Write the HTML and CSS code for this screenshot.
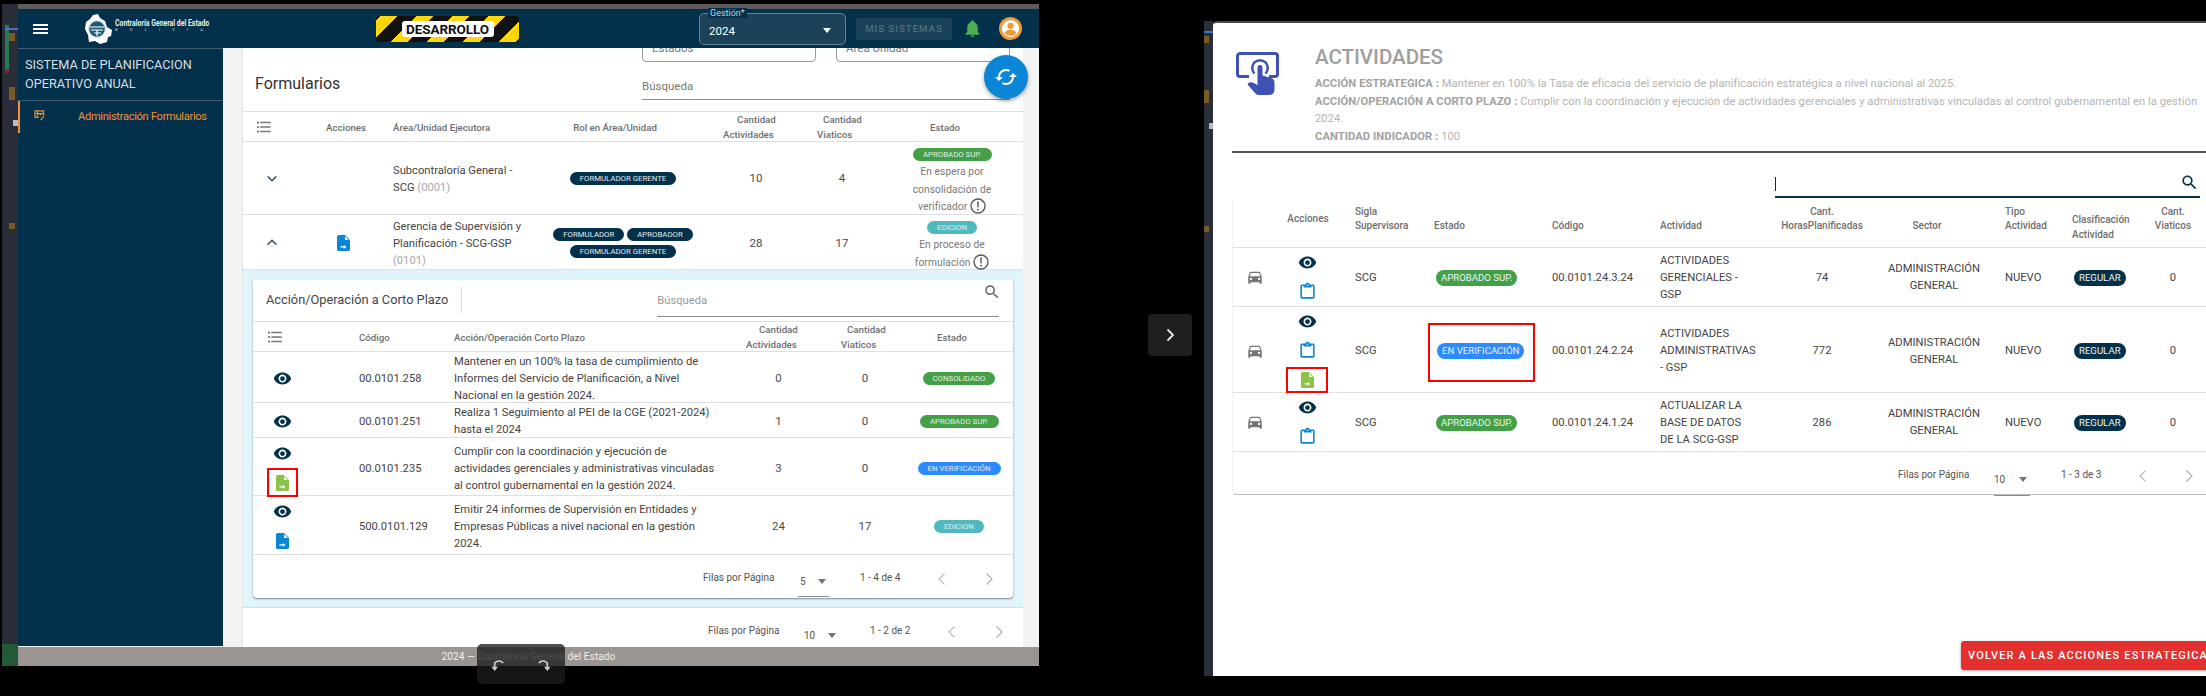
FILE: index.html
```html
<!DOCTYPE html>
<html lang="es">
<head>
<meta charset="utf-8">
<title>Formularios</title>
<link rel="stylesheet" href="styles.css">
</head>
<body>
<svg class="defs" width="0" height="0">
  <defs>
    <symbol id="eye" viewBox="0 0 24 24"><path fill="currentColor" d="M12 4.5C7 4.5 2.73 7.61 1 12c1.73 4.39 6 7.5 11 7.5s9.27-3.11 11-7.5c-1.73-4.39-6-7.5-11-7.5zM12 17c-2.76 0-5-2.24-5-5s2.24-5 5-5 5 2.24 5 5-2.24 5-5 5zm0-8c-1.66 0-3 1.34-3 3s1.34 3 3 3 3-1.34 3-3-1.34-3-3-3z"/></symbol>
    <symbol id="file" viewBox="0 0 13 16"><path fill="currentColor" d="M1.5 0H8l5 5v9.5a1.5 1.5 0 0 1-1.5 1.5h-10A1.5 1.5 0 0 1 0 14.500V1.500A1.500 1.500 0 0 1 1.500 0z"/><path fill="#fff" d="M8 1.200V5h3.800zM3.500 11.300h3.300V10l2.700 1.900-2.700 1.900v-1.300H3.500z"/></symbol>
    <symbol id="clip" viewBox="0 0 24 24"><path fill="currentColor" d="M19 3h-4.180C14.400 1.840 13.300 1 12 1c-1.300 0-2.400.84-2.820 2H5a2 2 0 0 0-2 2v14a2 2 0 0 0 2 2h14a2 2 0 0 0 2-2V5a2 2 0 0 0-2-2zm-7 0a1 1 0 1 1 0 2 1 1 0 0 1 0-2zM7 7h10V5h2v14H5V5h2z"/></symbol>
    <symbol id="car" viewBox="0 0 24 24"><path fill="currentColor" d="M18.920 6.010C18.720 5.420 18.160 5 17.500 5h-11c-.66 0-1.210.42-1.420 1.010L3 12v8c0 .55.45 1 1 1h1c.55 0 1-.45 1-1v-1h12v1c0 .55.45 1 1 1h1c.55 0 1-.45 1-1v-8l-2.080-5.990zM6.500 16c-.83 0-1.500-.67-1.500-1.500S5.670 13 6.500 13s1.500.67 1.500 1.500S7.330 16 6.500 16zm11 0c-.83 0-1.500-.67-1.500-1.500s.67-1.500 1.500-1.500 1.500.67 1.500 1.500-.67 1.500-1.500 1.500zM5 11l1.500-4.500h11L19 11H5z"/></symbol>
    <symbol id="list" viewBox="0 0 24 24"><path fill="currentColor" d="M7 5h14v2H7zM7 13v-2h14v2zM4 4.500a1.500 1.500 0 1 1 0 3 1.500 1.500 0 0 1 0-3zM4 10.500a1.500 1.500 0 1 1 0 3 1.500 1.500 0 0 1 0-3zM7 19v-2h14v2zM4 16.500a1.500 1.500 0 1 1 0 3 1.500 1.500 0 0 1 0-3z"/></symbol>
    <symbol id="search" viewBox="0 0 24 24"><path fill="currentColor" d="M15.500 14h-.79l-.28-.27C15.410 12.590 16 11.110 16 9.500 16 5.910 13.090 3 9.500 3S3 5.910 3 9.500 5.910 16 9.500 16c1.610 0 3.090-.59 4.230-1.570l.27.28v.79l5 4.990L20.490 19l-4.990-5zm-6 0C7.010 14 5 11.990 5 9.500S7.010 5 9.500 5 14 7.010 14 9.500 11.990 14 9.500 14z"/></symbol>
    <symbol id="info" viewBox="0 0 16 16"><circle cx="8" cy="8" r="7" fill="none" stroke="currentColor" stroke-width="1.300"/><path fill="currentColor" d="M7.200 3.500h1.600l-.2 6H7.400zM7.200 10.800h1.600v1.600H7.200z"/></symbol>
    <symbol id="left" viewBox="0 0 16 16"><path fill="none" stroke="currentColor" stroke-width="1.200" d="M10.500 2.500 5 8l5.500 5.500"/></symbol>
    <symbol id="right" viewBox="0 0 16 16"><path fill="none" stroke="currentColor" stroke-width="1.200" d="M5.500 2.500 11 8l-5.500 5.500"/></symbol>
  </defs>
</svg>

<div class="strip strip-left">
  <i class="bit bit-a"></i><i class="bit bit-b"></i><i class="bit bit-c"></i><i class="bit bit-d"></i><i class="bit bit-e"></i><i class="bit bit-f"></i><i class="bit bit-g"></i>
</div>

<section class="win win-left">
  <div class="chrome"></div>
  <header class="topbar">
    <button class="burger" type="button" aria-label="menu"><span></span><span></span><span></span></button>
    <div class="logo">
      <svg class="logo-map" viewBox="0 0 28 31"><path fill="#fff" d="M8 1l5-1 2 4 5 3 2 6 5 3-1 6-3 1-1 5-7 2-5-3-6 1-1-7-3-6 1-7 4-3z"/><circle cx="12" cy="15" r="8.500" fill="#1f5a75" stroke="#dfe8ec" stroke-width="1.500"/><path fill="none" stroke="#fff" stroke-width="1.200" d="M5 13h14M6 16h12M9 19h7M12 16v6"/></svg>
      <div class="logo-text"><b>Contraloría General del Estado</b><small>B O L I V I A</small></div>
    </div>
    <div class="hazard"><span>DESARROLLO</span></div>
    <div class="gestion">
      <span class="gestion-label">Gestión*</span>
      <span class="gestion-value">2024</span>
      <i class="caret caret-white"></i>
    </div>
    <button class="sys" type="button">MIS SISTEMAS</button>
    <svg class="bell" viewBox="0 0 24 24"><path fill="currentColor" d="M12 22c1.100 0 2-.9 2-2h-4c0 1.100.9 2 2 2zm6-6v-5c0-3.070-1.630-5.640-4.500-6.320V4c0-.83-.67-1.500-1.500-1.500s-1.500.67-1.500 1.500v.68C7.640 5.360 6 7.920 6 11v5l-2 2v1h16v-1l-2-2z"/></svg>
    <svg class="avatar" viewBox="0 0 24 24"><circle cx="12" cy="12" r="12" fill="#f09a37"/><circle cx="12" cy="12" r="9" fill="#fff"/><circle cx="12" cy="9.200" r="3.300" fill="#f09a37"/><path fill="#f09a37" d="M5.800 17c1-2.600 3.500-3.600 6.200-3.600s5.200 1 6.200 3.600a8 8 0 0 1-12.400 0z"/></svg>
  </header>

  <div class="body">
    <aside class="sidebar">
      <div class="side-title">SISTEMA DE PLANIFICACION OPERATIVO ANUAL</div>
      <a class="side-item">
        <svg class="side-ico" viewBox="0 0 12 12"><path fill="none" stroke="currentColor" stroke-width="1.200" d="M10.500 5.500V1H1v7h4M1 4h9.500M4 1v7M7 4v2"/><path fill="none" stroke="currentColor" stroke-width="1.400" d="M11 6 7.500 11"/></svg>
        <span>Administración Formularios</span>
      </a>
    </aside>

    <main class="main">
      <div class="card">
        <div class="card-top">
          <h1>Formularios</h1>
          <div class="card-tools">
            <div class="filters">
              <div class="outlined outlined-a"><span>Estados</span></div>
              <div class="outlined outlined-b"><span>Área Unidad</span></div>
            </div>
            <div class="search-line"><span>Búsqueda</span></div>
          </div>
        </div>

        <div class="grid-a grid-head">
          <div class="head-list"><svg class="ico-list"><use href="#list"/></svg></div>
          <div class="center">Acciones</div>
          <div class="pad-area">Área/Unidad Ejecutora</div>
          <div class="rol-cell">Rol en Área/Unidad</div>
          <div class="two two-act"><span>Cantidad</span><br>Actividades</div>
          <div class="two two-via"><span>Cantidad</span><br>Viaticos</div>
          <div class="estado-head">Estado</div>
        </div>

        <div class="grid-a row row-73">
          <div class="center chev"><svg class="ico-chev" viewBox="0 0 16 16"><path fill="none" stroke="currentColor" stroke-width="1.800" d="M3 5l5 5 5-5"/></svg></div>
          <div></div>
          <div class="pad-area">Subcontraloría General -<br>SCG <em>(0001)</em></div>
          <div class="chips-cell"><span class="chip chip-dark">FORMULADOR GERENTE</span></div>
          <div class="center num">10</div>
          <div class="center num">4</div>
          <div class="status-cell">
            <span class="chip chip-green chip-w79">APROBADO SUP.</span>
            <span class="note">En espera por<br>consolidación de<br>verificador <svg class="ico-info"><use href="#info"/></svg></span>
          </div>
        </div>

        <div class="grid-a row row-55">
          <div class="center chev"><svg class="ico-chev" viewBox="0 0 16 16"><path fill="none" stroke="currentColor" stroke-width="1.800" d="M3 10l5-5 5 5"/></svg></div>
          <div class="center doc-cell"><svg class="ico-file blue"><use href="#file"/></svg></div>
          <div class="pad-area">Gerencia de Supervisión y<br>Planificación - SCG-GSP<br><em>(0101)</em></div>
          <div class="chips-cell rol-stack">
            <div class="chip-pair"><span class="chip chip-dark">FORMULADOR</span><span class="chip chip-dark">APROBADOR</span></div>
            <span class="chip chip-dark">FORMULADOR GERENTE</span>
          </div>
          <div class="center num">28</div>
          <div class="center num">17</div>
          <div class="status-cell">
            <span class="chip chip-teal chip-w50">EDICION</span>
            <span class="note">En proceso de<br>formulación <svg class="ico-info"><use href="#info"/></svg></span>
          </div>
        </div>

        <div class="panel">
          <div class="inner">
            <div class="inner-top">
              <h2>Acción/Operación a Corto Plazo</h2>
              <div class="inner-search"><span>Búsqueda</span><svg class="ico-search"><use href="#search"/></svg></div>
            </div>
            <div class="grid-b grid-head">
              <div class="inner-list"><svg class="ico-list"><use href="#list"/></svg></div>
              <div class="pad-code">Código</div>
              <div>Acción/Operación Corto Plazo</div>
              <div class="two two-iact"><span>Cantidad</span><br>Actividades</div>
              <div class="two two-ivia"><span>Cantidad</span><br>Viaticos</div>
              <div class="iestado-head">Estado</div>
            </div>

            <div class="grid-b row row-51">
              <div class="acts"><span class="act"><svg class="ico-eye"><use href="#eye"/></svg></span></div>
              <div class="pad-code">00.0101.258</div>
              <div>Mantener en un 100% la tasa de cumplimiento de<br>Informes del Servicio de Planificación, a Nivel<br>Nacional en la gestión 2024.</div>
              <div class="center num">0</div>
              <div class="center num">0</div>
              <div class="center"><span class="chip chip-green chip-w72">CONSOLIDADO</span></div>
            </div>
            <div class="grid-b row row-35">
              <div class="acts"><span class="act"><svg class="ico-eye"><use href="#eye"/></svg></span></div>
              <div class="pad-code">00.0101.251</div>
              <div>Realiza 1 Seguimiento al PEI de la CGE (2021-2024)<br>hasta el 2024</div>
              <div class="center num">1</div>
              <div class="center num">0</div>
              <div class="center"><span class="chip chip-green chip-w79">APROBADO SUP.</span></div>
            </div>
            <div class="grid-b row row-58">
              <div class="acts">
                <span class="act"><svg class="ico-eye"><use href="#eye"/></svg></span>
                <span class="act"><span class="flag flag-s"><svg class="ico-file lime"><use href="#file"/></svg></span></span>
              </div>
              <div class="pad-code">00.0101.235</div>
              <div>Cumplir con la coordinación y ejecución de<br>actividades gerenciales y administrativas vinculadas<br>al control gubernamental en la gestión 2024.</div>
              <div class="center num">3</div>
              <div class="center num">0</div>
              <div class="center"><span class="chip chip-blue chip-w83">EN VERIFICACIÓN</span></div>
            </div>
            <div class="grid-b row row-59">
              <div class="acts">
                <span class="act"><svg class="ico-eye"><use href="#eye"/></svg></span>
                <span class="act"><svg class="ico-file blue"><use href="#file"/></svg></span>
              </div>
              <div class="pad-code">500.0101.129</div>
              <div>Emitir 24 informes de Supervisión en Entidades y<br>Empresas Públicas a nivel nacional en la gestión<br>2024.</div>
              <div class="center num">24</div>
              <div class="center num">17</div>
              <div class="center"><span class="chip chip-teal chip-w50">EDICION</span></div>
            </div>

            <div class="pager pager-inner">
              <span class="p-label">Filas por Página</span>
              <span class="p-select p-under"><span>5</span><i class="caret"></i></span>
              <span class="p-range">1 - 4 de 4</span>
              <svg class="p-chev p-chev-a"><use href="#left"/></svg>
              <svg class="p-chev p-chev-b"><use href="#right"/></svg>
            </div>
          </div>
        </div>

        <div class="pager pager-outer">
          <span class="p-label">Filas por Página</span>
          <span class="p-select"><span>10</span><i class="caret"></i></span>
          <span class="p-range">1 - 2 de 2</span>
          <svg class="p-chev p-chev-a"><use href="#left"/></svg>
          <svg class="p-chev p-chev-b"><use href="#right"/></svg>
        </div>
      </div>
      <button class="fab" type="button" aria-label="refrescar"><svg viewBox="0 0 24 24"><path fill="#fff" transform="rotate(90 12 12)" d="M12 18a6 6 0 0 1-6-6c0-1 .25-1.970.7-2.800L5.240 7.740A7.900 7.900 0 0 0 4 12a8 8 0 0 0 8 8v3l4-4-4-4zM12 4V1L8 5l4 4V6a6 6 0 0 1 6 6c0 1-.25 1.970-.7 2.800l1.460 1.460A7.900 7.900 0 0 0 20 12a8 8 0 0 0-8-8z"/></svg></button>
    </main>
  </div>
  <footer class="foot">2024 — Contraloría General del Estado</footer>
</section>
<div class="foot-green"></div>

<div class="toolbar">
  <svg viewBox="0 0 16 16"><path fill="none" stroke="currentColor" stroke-width="1.700" d="M14 6.500C12 3.500 7.500 3.500 5 6.500v6"/><path fill="currentColor" d="M1.500 10.500h7L5 15z"/></svg>
  <svg viewBox="0 0 16 16"><path fill="none" stroke="currentColor" stroke-width="1.700" d="M2 6.500C4 3.500 8.500 3.500 11 6.500v6"/><path fill="currentColor" d="M7.500 10.500h7L11 15z"/></svg>
</div>

<button class="nav-next" type="button" aria-label="siguiente"><svg viewBox="0 0 16 16"><path fill="none" stroke="currentColor" stroke-width="1.800" d="M5.500 2.500 11 8l-5.500 5.500"/></svg></button>

<div class="strip strip-right">
  <i class="bit bit-h"></i><i class="bit bit-i"></i><i class="bit bit-j"></i><i class="bit bit-k"></i><i class="bit bit-l"></i>
</div>

<section class="win win-right">
  <div class="act-head">
    <svg class="touch" viewBox="0 0 43 43"><path fill="none" stroke="currentColor" stroke-width="3" d="M13 24.500H4A2.500 2.500 0 0 1 1.500 22V4A2.500 2.500 0 0 1 4 1.500h35A2.500 2.500 0 0 1 41.500 4v18a2.500 2.500 0 0 1-2.500 2.500h-6"/><path fill="none" stroke="currentColor" stroke-width="2.500" d="M18.500 21.500a7.800 7.800 0 1 1 11 0"/><path fill="currentColor" d="M21.500 15.500a2.500 2.500 0 0 1 5 0v8l8.500 2.500c2 .6 3.500 2 3.500 4.500V38a5 5 0 0 1-5 5H23c-2 0-3-1-4-2l-7-8c-.6-.8-.4-1.500 1-2.200 2-1 4-.5 8.500 2.500z"/></svg>
    <div class="act-text">
      <h1>ACTIVIDADES</h1>
      <p><b>ACCIÓN ESTRATEGICA :</b> Mantener en 100% la Tasa de eficacia del servicio de planificación estratégica a nivel nacional al 2025.</p>
      <p><b>ACCIÓN/OPERACIÓN A CORTO PLAZO :</b> Cumplir con la coordinación y ejecución de actividades gerenciales y administrativas vinculadas al control gubernamental en la gestión<br>2024.</p>
      <p><b>CANTIDAD INDICADOR :</b> 100</p>
    </div>
  </div>

  <div class="act-search"><div class="act-search-box"><i class="cursor"></i><svg class="ico-search navy"><use href="#search"/></svg></div></div>

  <div class="act-table">
    <div class="grid-c grid-head head-48">
      <div></div>
      <div class="center up">Acciones</div>
      <div class="pad-sigla down">Sigla<br>Supervisora</div>
      <div class="single">Estado</div>
      <div class="single">Código</div>
      <div class="single">Actividad</div>
      <div class="center down cant">Cant.<br>HorasPlanificadas</div>
      <div class="center single sector">Sector</div>
      <div class="pad-tipo down">Tipo<br>Actividad</div>
      <div class="clasif">Clasificación<br>Actividad</div>
      <div class="center down">Cant.<br>Viaticos</div>
    </div>

    <div class="grid-c row r-59">
      <div class="center"><svg class="ico-car"><use href="#car"/></svg></div>
      <div class="acts"><span class="act"><svg class="ico-eye"><use href="#eye"/></svg></span><span class="act"><svg class="ico-clip"><use href="#clip"/></svg></span></div>
      <div class="pad-sigla">SCG</div>
      <div><span class="chip-r chip-green">APROBADO SUP.</span></div>
      <div>00.0101.24.3.24</div>
      <div class="clip-cell">ACTIVIDADES<br>GERENCIALES -<br>GSP</div>
      <div class="center cant">74</div>
      <div class="center">ADMINISTRACIÓN<br>GENERAL</div>
      <div class="pad-tipo">NUEVO</div>
      <div><span class="chip-r chip-dark chip-reg">REGULAR</span></div>
      <div class="center">0</div>
    </div>
    <div class="grid-c row r-86">
      <div class="center"><svg class="ico-car"><use href="#car"/></svg></div>
      <div class="acts"><span class="act"><svg class="ico-eye"><use href="#eye"/></svg></span><span class="act"><svg class="ico-clip"><use href="#clip"/></svg></span><span class="act"><span class="flag flag-w"><svg class="ico-file lime"><use href="#file"/></svg></span></span></div>
      <div class="pad-sigla">SCG</div>
      <div><span class="flag flag-chip"><span class="chip-r chip-blue">EN VERIFICACIÓN</span></span></div>
      <div>00.0101.24.2.24</div>
      <div class="clip-cell">ACTIVIDADES<br>ADMINISTRATIVAS<br>- GSP</div>
      <div class="center cant">772</div>
      <div class="center">ADMINISTRACIÓN<br>GENERAL</div>
      <div class="pad-tipo">NUEVO</div>
      <div><span class="chip-r chip-dark chip-reg">REGULAR</span></div>
      <div class="center">0</div>
    </div>
    <div class="grid-c row r-59">
      <div class="center"><svg class="ico-car"><use href="#car"/></svg></div>
      <div class="acts"><span class="act"><svg class="ico-eye"><use href="#eye"/></svg></span><span class="act"><svg class="ico-clip"><use href="#clip"/></svg></span></div>
      <div class="pad-sigla">SCG</div>
      <div><span class="chip-r chip-green">APROBADO SUP.</span></div>
      <div>00.0101.24.1.24</div>
      <div class="clip-cell">ACTUALIZAR LA<br>BASE DE DATOS<br>DE LA SCG-GSP</div>
      <div class="center cant">286</div>
      <div class="center">ADMINISTRACIÓN<br>GENERAL</div>
      <div class="pad-tipo">NUEVO</div>
      <div><span class="chip-r chip-dark chip-reg">REGULAR</span></div>
      <div class="center">0</div>
    </div>

    <div class="pager pager-act">
      <span class="p-label">Filas por Página</span>
      <span class="p-select p-under"><span>10</span><i class="caret"></i></span>
      <span class="p-range">1 - 3 de 3</span>
      <svg class="p-chev p-chev-a"><use href="#left"/></svg>
      <svg class="p-chev p-chev-b"><use href="#right"/></svg>
    </div>
  </div>

  <button class="back" type="button">VOLVER A LAS ACCIONES ESTRATEGICAS</button>
</section>
</body>
</html>
```

FILE: styles.css
```css
* { box-sizing: border-box; }
html, body { margin: 0; padding: 0; }
body {
  position: relative;
  width: 2206px;
  height: 696px;
  overflow: hidden;
  background: #000;
  font-family: Roboto, "Liberation Sans", sans-serif;
  font-size: 11.2px;
  color: #444;
}
.defs { position: absolute; }
h1, h2, p { margin: 0; font-weight: 400; }
button { font-family: inherit; border: 0; padding: 0; }
em { font-style: normal; color: #a8a8a8; }

/* windows on the desktop */
.win { position: absolute; overflow: hidden; }
.win-left { left: 18px; top: 4px; width: 1021px; height: 662px; display: flex; flex-direction: column; background: #f3f3f3; }
.win-right { left: 1213px; top: 21px; width: 993px; height: 655px; background: #fff; border-top: 2px solid #4a4a4a; border-top-left-radius: 4px; display: flex; flex-direction: column; }
.strip { position: absolute; background: #2a2e38; }
.strip-left { left: 2px; top: 4px; width: 16px; height: 662px; }
.strip-right { left: 1204px; top: 21px; width: 9px; height: 655px; }
.bit { position: absolute; display: block; }
.bit-a { left: 3px; top: 21px; width: 4px; height: 48px; background: #2c7a55; }
.bit-b { left: 3px; top: 24px; width: 13px; height: 2px; background: #4472c4; }
.bit-c { left: 7px; top: 29px; width: 6px; height: 8px; background: #7a5a28; }
.bit-d { left: 7px; top: 83px; width: 6px; height: 13px; background: #7a5a28; }
.bit-e { left: 11px; top: 116px; width: 5px; height: 6px; background: #b4bcc8; }
.bit-f { left: 7px; top: 219px; width: 6px; height: 6px; background: #7a5a28; }
.bit-g { left: 3px; top: 65px; width: 4px; height: 4px; background: #7a2b38; }
.bit-h { left: 0; top: 10px; width: 9px; height: 2px; background: #4472c4; }
.bit-i { left: 0; top: 15px; width: 5px; height: 7px; background: #7a5a28; }
.bit-j { left: 0; top: 69px; width: 5px; height: 13px; background: #7a5a28; }
.bit-k { left: 5px; top: 102px; width: 4px; height: 6px; background: #b4bcc8; }
.bit-l { left: 0; top: 205px; width: 5px; height: 6px; background: #7a5a28; }
.foot-green { position: absolute; left: 2px; top: 644px; width: 16px; height: 22px; background: #235a36; }

.chrome { height: 5px; background: #5c5c5c; flex: none; }
.topbar { height: 39px; flex: none; background: #03304a; display: flex; align-items: center; position: relative; }
.burger { width: 15px; height: 10px; margin-left: 15px; background: none; display: flex; flex-direction: column; justify-content: space-between; flex: none; }
.burger span { display: block; height: 2px; background: #fff; }
.logo { display: flex; align-items: center; margin-left: 37px; width: 291px; flex: none; }
.logo-map { width: 28px; height: 31px; flex: none; margin-top: 1px; }
.logo-text { margin-left: 2px; margin-top: -6px; color: #e8eef1; white-space: nowrap; line-height: 8px; }
.logo-text b { display: block; font-family: "Liberation Sans Narrow", Roboto, sans-serif; font-size: 9.200px; transform: scaleX(.75); transform-origin: left center; }
.logo-text small { display: block; font-size: 4px; letter-spacing: 5.600px; line-height: 6px; color: #c3ccd1; }
.hazard { width: 143px; height: 26px; border-radius: 4px; display: flex; align-items: center; justify-content: center; background: repeating-linear-gradient(135deg, #111 0 3px, #ffd60a 3px 15px, #111 15px 25.500px); flex: none; }
.hazard span { width: 92px; height: 16px; border-radius: 3px; background: #fff; color: #111; font-size: 13.500px; font-weight: 700; line-height: 16px; text-align: center; letter-spacing: -.1px; }
.gestion { position: relative; margin-left: 180px; width: 147px; height: 32px; background: #1b4257; border: 1px solid #668394; border-radius: 5px; color: #fff; flex: none; }
.gestion-label { position: absolute; left: 8px; top: -6px; padding: 0 2px; background: #03304a; font-size: 9px; line-height: 10px; color: #c7d2d8; }
.gestion-value { position: absolute; left: 9px; top: 10px; font-size: 11.500px; line-height: 14px; }
.gestion .caret { position: absolute; right: 14px; top: 14px; }
.caret { display: inline-block; width: 0; height: 0; border: 4px solid transparent; border-top: 5px solid #757575; border-bottom: 0; }
.caret-white { border-top-color: #fff; }
.sys { margin-left: 10px; width: 96px; height: 22px; border-radius: 3px; background: #1a4258; color: #4f6f80; font-size: 9.600px; font-weight: 500; letter-spacing: 1px; flex: none; }
.bell { width: 21px; height: 21px; color: #4caf50; margin-left: 10px; flex: none; }
.avatar { width: 23px; height: 23px; margin-left: 16px; flex: none; }

.body { flex: 1; min-height: 0; display: flex; position: relative; }
.sidebar { width: 205px; flex: none; background: #03304a; border-top: 1px solid #3f5c6f; margin-bottom: 1px; }
.side-title { height: 52px; padding: 6px 12px 0 7px; border-bottom: 1px solid #3f5c6f; color: #d7dfe4; font-size: 12.700px; line-height: 19px; }
.side-item { height: 32px; display: flex; align-items: center; border-left: 2px solid #f0923b; color: #f0923b; font-size: 11.100px; letter-spacing: -.3px; }
.side-ico { width: 11px; height: 11px; margin-left: 14px; margin-top: -4px; flex: none; }
.side-item span { margin-left: 33px; margin-top: -1px; white-space: nowrap; }

.main { flex: 1; min-width: 0; position: relative; padding-left: 19px; }
.card { width: 781px; height: 100%; background: #fff; overflow: hidden; border-left: 1px solid #e4e4e4; }
.card-top { height: 64px; display: flex; justify-content: space-between; border-bottom: 1px solid #e0e0e0; }
.card-top h1 { font-size: 16px; color: #333; margin: 27px 0 0 12px; line-height: 18px; }
.card-tools { width: 368px; margin-right: 13px; }
.filters { height: 14px; display: flex; justify-content: space-between; overflow: hidden; }
.outlined { height: 34px; margin-top: -20px; border: 1px solid #9a9a9a; border-radius: 4px; padding: 12px 9px; font-size: 11.500px; color: #777; line-height: 15px; }
.outlined-a { width: 174px; }
.outlined-b { width: 174px; }
.search-line { margin-top: 16px; height: 22px; border-bottom: 1px solid #8c8c8c; font-size: 11.500px; color: #777; line-height: 17px; }

.grid-a { display: grid; grid-template-columns: 60px 86px 157px 165px 90px 82px 138px; }
.grid-b { display: grid; grid-template-columns: 59px 142px 282px 85px 88px 100px 5px; }
.grid-c { display: grid; grid-template-columns: 43px 62px 96px 118px 108px 96px 125px 106px 85px 69px 64px; }
.grid-head { height: 30px; align-items: center; border-bottom: 1px solid #e0e0e0; font-size: 9.700px; font-weight: 500; color: #6e6e6e; line-height: 15px; white-space: nowrap; }
.row { align-items: center; border-bottom: 1px solid #e0e0e0; line-height: 17px; white-space: nowrap; }
.row-73 { height: 73px; }
.row-55 { height: 55px; }
.row-51 { height: 51px; padding-top: 1px; }
.row-35 { height: 35px; padding-top: 1px; }
.row-58 { height: 58px; padding-top: 1px; }
.row-59 { height: 59px; padding-top: 1px; }
.center { text-align: center; display: flex; flex-direction: column; align-items: center; justify-content: center; }
.num { font-size: 11.500px; color: #4a4a4a; }
.head-list { padding-left: 12px; }
.ico-list { display: block; width: 18px; height: 18px; color: #777; }
.pad-area { padding-left: 4px; }
.rol-cell { padding-right: 27px; display: flex; flex-direction: column; align-items: center; justify-content: center; }
.chips-cell { padding-right: 11px; display: flex; flex-direction: column; align-items: center; justify-content: center; }
.rol-stack { gap: 4px; }
.chip-pair { display: flex; gap: 3px; }
.doc-cell { padding-right: 6px; }
.chev { padding-right: 2px; }
.two span { display: inline-block; }
.two-act { padding-left: 12px; }
.two-act span { margin-left: 14px; }
.two-via { padding-left: 16px; }
.two-via span { margin-left: 6px; }
.estado-head { text-align: center; padding-right: 14px; }
.status-cell { display: flex; flex-direction: column; align-items: center; color: #777; padding-top: 6px; }
.note { display: block; text-align: center; color: #777; font-size: 10.200px; line-height: 17.500px; margin-top: 2px; letter-spacing: .1px; }
.ico-info { width: 16px; height: 16px; vertical-align: -4px; color: #555; }
.chev { color: #3e5566; }
.ico-chev { width: 14px; height: 14px; display: block; }
.ico-file { display: block; width: 13px; height: 16px; }
.blue { color: #0b86d6; }
.lime { color: #8bc34a; }
.chip { display: inline-block; height: 13px; padding: 0 10px; border-radius: 7px; font-size: 7.800px; line-height: 13px; text-align: center; color: #e4ecef; white-space: nowrap; }
.chip-dark { background: #03304a; }
.chip-green { background: #43a047; }
.chip-teal { background: #4fb9bf; }
.chip-blue { background: #2e8bff; }
.chip-w79 { width: 79px; padding: 0; }
.chip-w72 { width: 72px; padding: 0; }
.chip-w83 { width: 83px; padding: 0; }
.chip-w50 { width: 50px; padding: 0; }

.panel { background: #e0f4fc; padding: 10px; height: 338px; border-bottom: 1px solid #dcdcdc; }
.inner { height: 318px; background: #fff; border-radius: 0 0 4px 4px; box-shadow: 0 1px 2px rgba(0,0,0,.45); }
.inner-top { height: 42px; display: flex; align-items: center; border-bottom: 1px solid #e0e0e0; position: relative; }
.inner-top h2 { font-size: 12.800px; color: #444; padding: 0 13px 0 13px; height: 26px; line-height: 26px; border-right: 1px solid #dcdcdc; margin-top: -2px; white-space: nowrap; }
.inner-search { position: relative; margin-left: 195px; width: 342px; height: 25px; margin-top: 8px; border-bottom: 1px solid #8c8c8c; color: #999; font-size: 11.200px; line-height: 18px; }
.ico-search { position: absolute; right: -2px; top: -9px; width: 18px; height: 18px; color: #666; }
.inner-list { padding-left: 13px; }
.pad-code { padding-left: 47px; }
.two-iact { padding-left: 10px; }
.two-iact span { margin-left: 13px; }
.two-ivia { padding-left: 20px; }
.two-ivia span { margin-left: 6px; }
.iestado-head { text-align: center; padding-right: 14px; }
.acts { display: flex; flex-direction: column; align-items: center; justify-content: center; }
.act { height: 29px; display: flex; align-items: center; justify-content: center; }
.ico-eye { display: block; width: 19px; height: 19px; color: #03304a; }
.ico-clip { display: block; width: 19px; height: 19px; color: #0b86d6; }
.ico-car { display: block; width: 18px; height: 18px; color: #757575; }
.flag { display: flex; align-items: center; justify-content: center; border: 2px solid #f00; }
.flag-s { width: 31px; height: 29px; }
.flag-w { width: 42px; height: 26px; }
.flag-chip { width: 107px; height: 59px; margin-left: -6px; margin-top: 3px; justify-content: flex-start; padding-left: 7px; padding-bottom: 3px; }

.pager { display: flex; justify-content: flex-end; font-size: 10px; color: #555; white-space: nowrap; }
.p-select { display: flex; align-items: center; justify-content: space-between; }
.p-chev { width: 16px; height: 16px; color: #bdbdbd; flex: none; }
.p-chev-b { color: #b0b0b0; }
.pager-inner { height: 43px; align-items: flex-start; padding: 17px 16px 0 0; }
.pager-inner .p-label { width: 68px; }
.pager-inner .p-select { width: 31px; margin-left: 27px; height: 25px; padding: 0 3px 5px 2px; }
.p-under { border-bottom: 1px solid #8c8c8c; }
.pager-inner .p-range { width: 40px; margin-left: 31px; }
.pager-inner .p-chev-a { margin-left: 34px; margin-top: -1px; }
.pager-inner .p-chev-b { margin-left: 31px; margin-top: -1px; }
.pager-outer { height: 39px; align-items: flex-start; padding: 17px 16px 0 0; }
.pager-outer .p-label { width: 68px; }
.pager-outer .p-select { width: 32px; margin-left: 28px; height: 26px; padding: 0 0 6px 0; }
.pager-outer .p-range { width: 40px; margin-left: 34px; }
.pager-outer .p-chev-a { margin-left: 34px; margin-top: -1px; }
.pager-outer .p-chev-b { margin-left: 31px; margin-top: -1px; }

.fab { position: absolute; left: 761px; top: 7px; width: 44px; height: 44px; border-radius: 50%; background: #0b86d6; box-shadow: 0 2px 4px rgba(0,0,0,.35); display: flex; align-items: center; justify-content: center; }
.fab svg { width: 24px; height: 24px; }
.foot { height: 19px; flex: none; background: #9a9592; color: #f1efee; text-align: center; font-size: 10px; line-height: 19px; letter-spacing: .1px; }
.toolbar { position: absolute; left: 477px; top: 644px; width: 88px; height: 40px; border-radius: 5px; background: rgba(28,28,28,.78); color: #cfcfcf; display: flex; align-items: center; justify-content: space-between; padding: 0 13px; }
.toolbar svg { width: 15px; height: 15px; }
.nav-next { position: absolute; left: 1148px; top: 314px; width: 44px; height: 42px; border-radius: 4px; background: #1f1f1f; color: #e6e6e6; display: flex; align-items: center; justify-content: center; }
.nav-next svg { width: 16px; height: 16px; }

.act-head { height: 130px; margin-left: 19px; border-bottom: 2px solid #555; display: flex; flex: none; }
.touch { width: 43px; height: 43px; margin: 29px 0 0 4px; color: #3f51b5; flex: none; }
.act-text { margin-left: 36px; color: #b4b4b4; font-size: 11.200px; line-height: 17px; letter-spacing: .06px; }
.act-text h1 { font-size: 20.500px; font-weight: 500; color: #9e9e9e; line-height: 24px; margin-top: 22px; letter-spacing: 0; }
.act-text p { white-space: nowrap; }
.act-text h1 + p { margin-top: 6px; }
.act-text p + p { margin-top: 1px; }
.act-text b { font-weight: 700; color: #a2a2a2; }
.act-search { height: 47px; display: flex; justify-content: flex-end; align-items: flex-start; padding-right: 6px; flex: none; }
.act-search-box { position: relative; width: 425px; height: 45px; border-bottom: 2px solid #03304a; }
.cursor { position: absolute; left: 0; top: 24px; width: 1px; height: 14px; background: #03304a; }
.navy { color: #03304a; right: 1px; top: 20px; width: 19px; height: 19px; }
.act-table { margin-left: 19px; height: 295px; flex: none; border-left: 1px solid #f2f2f2; border-bottom: 1px solid #bcbcbc; border-bottom-left-radius: 4px; margin-top: 0; }
.head-48 { height: 48px; align-items: stretch; font-size: 10px; line-height: 14px; }
.head-48 > div { display: block; }
.head-48 .center { display: block; }
.up { padding-top: 12px; padding-left: 2px; }
.down { padding-top: 5px; }
.single { padding-top: 19px; }
.clasif { padding-top: 12px; line-height: 15px; }
.pad-sigla { padding-left: 17px; }
.pad-tipo { padding-left: 18px; }
.cant { padding-left: 7px; }
.sector { padding-right: 14px; }
.r-59 { height: 59px; }
.r-86 { height: 86px; }
.clip-cell { overflow: hidden; }
.chip-r { display: inline-block; height: 16px; padding: 0 5px; border-radius: 8px; font-size: 9.600px; line-height: 16px; color: #eef3f5; margin-left: 2px; white-space: nowrap; }
.flag-chip .chip-r { margin-left: 0; }
.chip-reg { margin-left: 2px; }
.pager-act { height: 43px; align-items: flex-start; padding: 17px 9px 0 0; }
.pager-act .p-label { width: 69px; }
.pager-act .p-select { width: 36px; margin-left: 27px; height: 27px; padding: 0 3px 5px 0; }
.pager-act .p-range { width: 40px; margin-left: 31px; }
.pager-act .p-chev-a { margin-left: 34px; margin-top: -1px; }
.pager-act .p-chev-b { margin-left: 30px; margin-top: -1px; }
.back { position: absolute; left: 748px; bottom: 6px; width: 270px; height: 29px; border-radius: 3px; background: #e53030; color: #fff; font-size: 11px; font-weight: 500; letter-spacing: 1.150px; text-align: left; padding-left: 7px; white-space: nowrap; box-shadow: 0 1px 3px rgba(0,0,0,.35); }
```
